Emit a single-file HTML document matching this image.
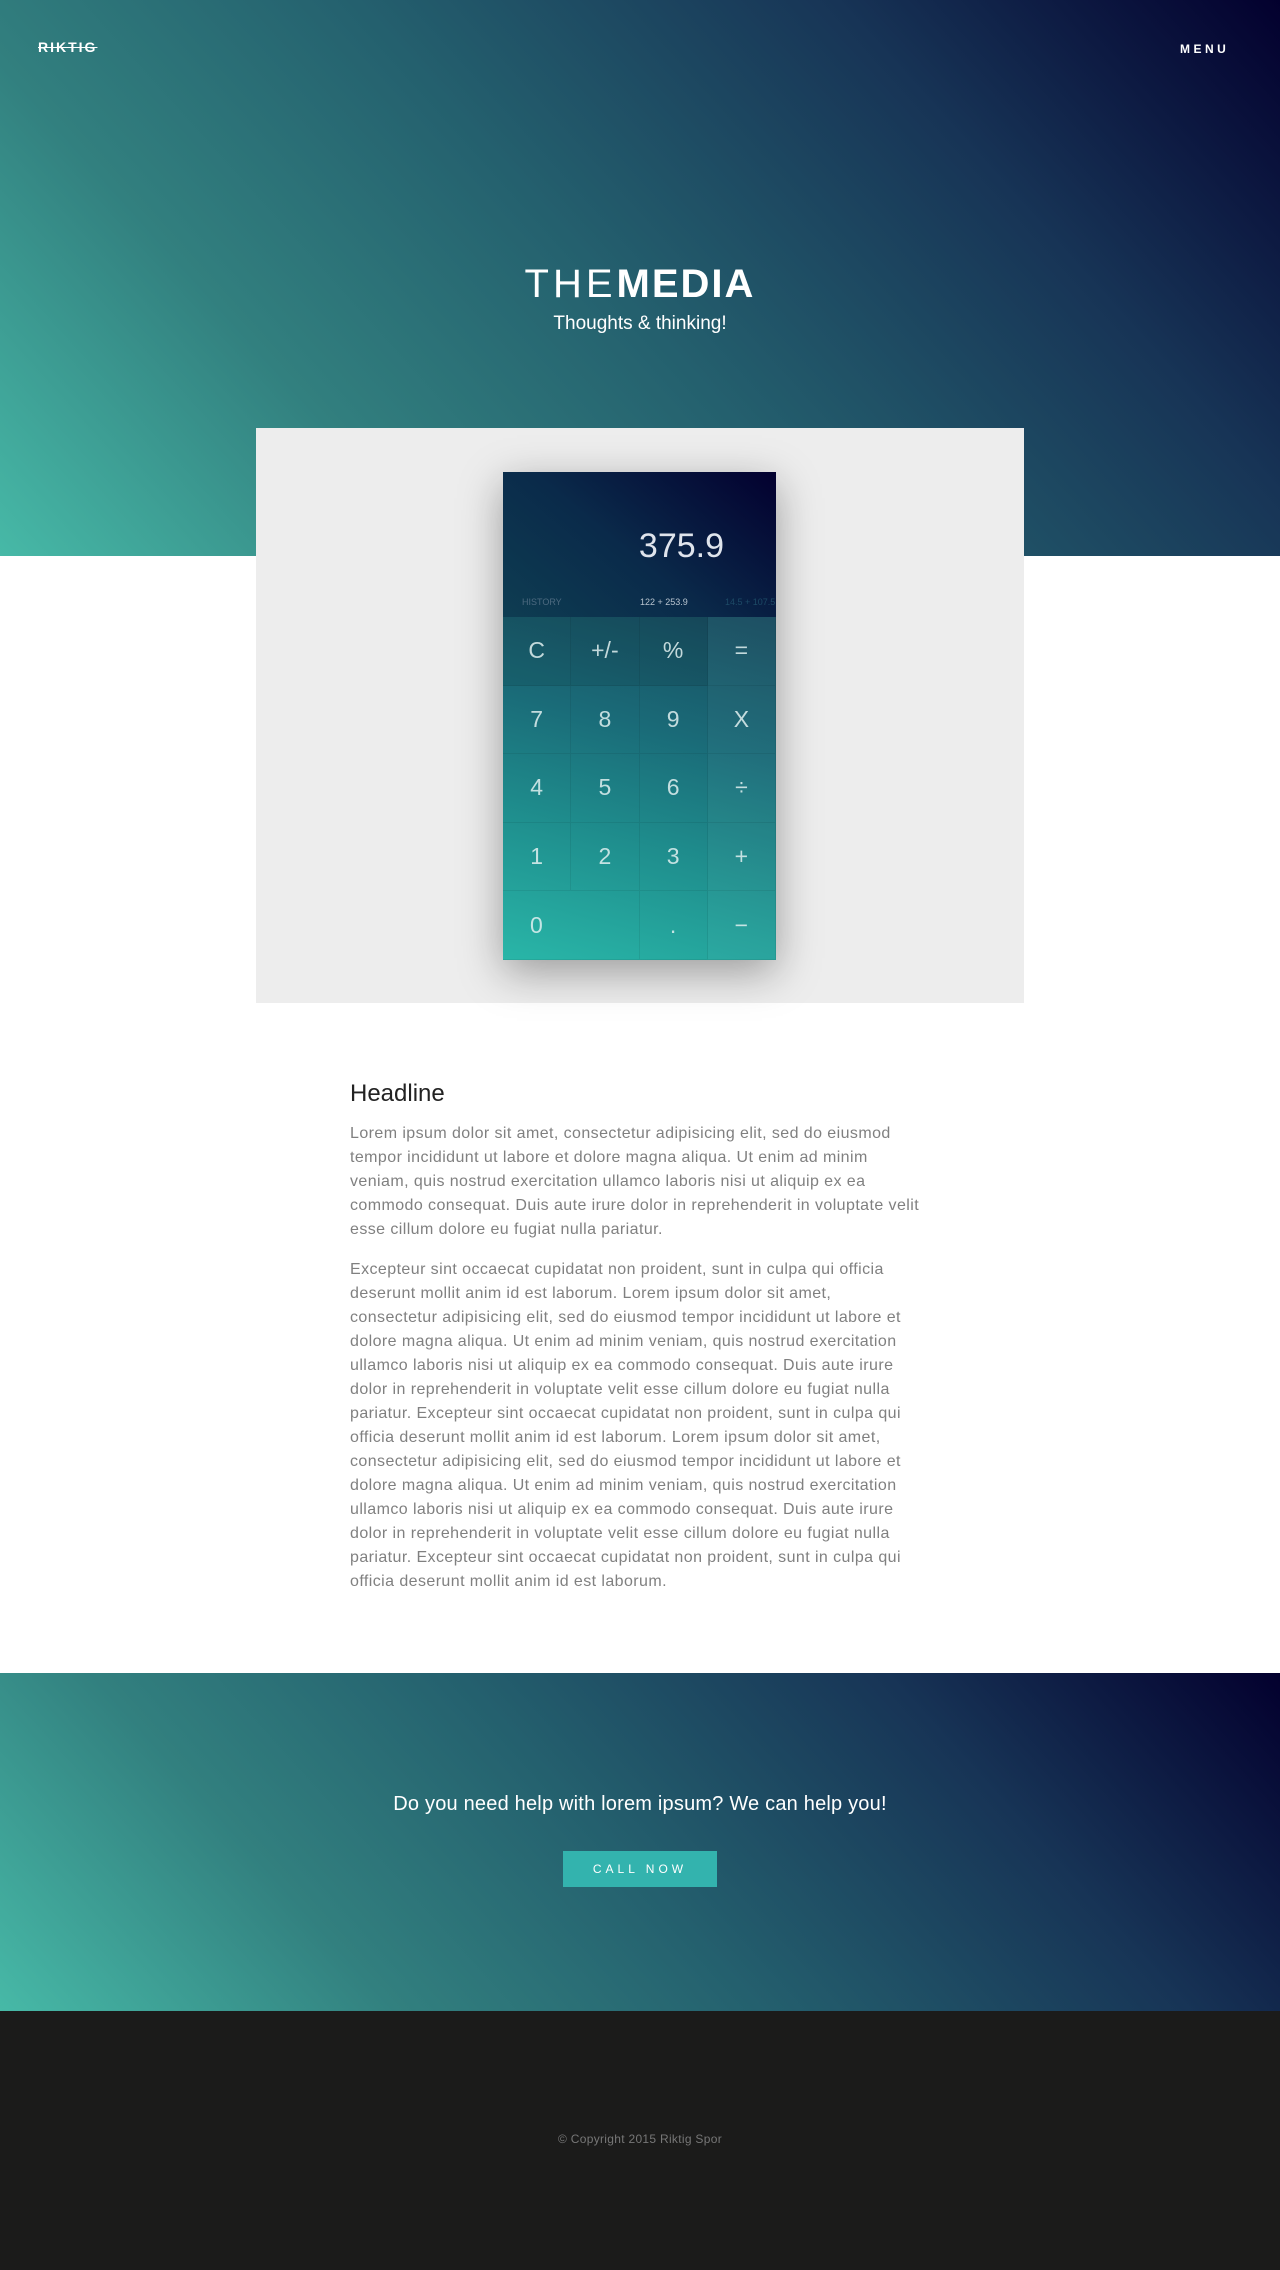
<!DOCTYPE html>
<html><head><meta charset="utf-8"><style>
*{margin:0;padding:0;box-sizing:border-box}
body{width:1280px;height:2270px;font-family:"Liberation Sans",sans-serif;background:#fff;position:relative;overflow:hidden}
.grad{background:linear-gradient(48deg,#47b9a7 0%,#32807f 25%,#24606e 48%,#173456 75%,#03002e 100%)}
#hero{position:absolute;left:0;top:0;width:1280px;height:556px}
.logo{position:absolute;left:38px;top:39px;color:#fff;font-weight:bold;font-size:14px;letter-spacing:2px;text-decoration:line-through}
.menu{position:absolute;left:1180px;top:42px;color:#fff;font-weight:bold;font-size:12px;letter-spacing:3.5px}
h1{position:absolute;left:0;width:1280px;top:262px;text-align:center;color:#fff;font-size:40px;font-weight:300;letter-spacing:2px}
h1 span{letter-spacing:4px}
h1 b{font-weight:bold}
.sub{position:absolute;left:0;width:1280px;top:313px;text-align:center;color:#fff;font-size:19px}
#media{position:absolute;left:256px;top:428px;width:768px;height:575px;background:#ededed}
#calc{position:absolute;left:247px;top:44px;width:273px;height:488px;box-shadow:0 12px 40px rgba(0,0,0,.35);overflow:hidden}
.top{position:absolute;left:0;top:0;width:273px;height:145px;background:linear-gradient(40deg,#0e3d52 0%,#0a2a4a 45%,#03002f 100%)}
.disp{position:absolute;right:52px;top:55px;color:#dfe4ec;font-size:34px;font-weight:300}
.hist{position:absolute;top:125px;font-size:9px;color:#8aa}
.keys{position:absolute;left:0;top:145px;width:273px;height:343px;display:grid;grid-template-columns:repeat(4,1fr);grid-template-rows:repeat(5,1fr);background:linear-gradient(15deg,#29b6a8 0%,#1f8f8e 35%,#1a6b78 65%,#174a5e 100%)}
.keys div{border-right:1px solid rgba(0,0,0,.07);border-bottom:1px solid rgba(0,0,0,.07);color:rgba(225,240,240,.85);font-size:23px;display:flex;align-items:center;justify-content:center}
.keys .op{background:rgba(255,255,255,.03)}
.keys .dk{background:rgba(0,0,0,.08)}
#text{position:absolute;left:350px;top:1080px;width:600px}
#text h2{font-size:24px;font-weight:normal;color:#222;margin-bottom:14px}
#text p{font-size:16px;letter-spacing:.42px;line-height:24px;color:#808080;white-space:nowrap;margin-bottom:16px}
#cta{position:absolute;left:0;top:1673px;width:1280px;height:338px}
.ctat{position:absolute;top:120px;width:1280px;text-align:center;color:#fff;font-size:20px;letter-spacing:.2px}
.btn{position:absolute;left:563px;top:178px;width:154px;height:36px;background:#33b3ae;color:#fff;font-size:12px;letter-spacing:4px;text-align:center;line-height:36px}
#foot{position:absolute;left:0;top:2011px;width:1280px;height:259px;background:#1b1b1a}
.copy{position:absolute;top:121px;width:1280px;text-align:center;color:#777;font-size:12px;letter-spacing:.3px}
</style></head><body>
<div id="hero" class="grad">
<div class="logo">RIKTIG</div>
<div class="menu">MENU</div>
<h1><span>THE</span><b>MEDIA</b></h1>
<div class="sub">Thoughts &amp; thinking!</div>
</div>
<div id="media">
<div id="calc">
<div class="top"></div>
<div class="disp">375.9</div>
<div class="hist" style="left:19px;color:#4d6a80">HISTORY</div>
<div class="hist" style="left:137px;color:#b8c4cf">122 + 253.9</div>
<div class="hist" style="left:222px;color:#1d4a66">14.5 + 107.5</div>
<div class="keys">
<div class="dk">C</div><div class="dk">+/-</div><div class="dk">%</div><div class="op">=</div>
<div>7</div><div>8</div><div>9</div><div class="op">X</div>
<div>4</div><div>5</div><div>6</div><div class="op">÷</div>
<div>1</div><div>2</div><div>3</div><div class="op">+</div>
<div style="justify-content:flex-start;padding-left:27px;border-right:none">0</div><div></div><div>.</div><div class="op">−</div>
</div>
</div>
</div>
<div id="text">
<h2>Headline</h2>
<p>Lorem ipsum dolor sit amet, consectetur adipisicing elit, sed do eiusmod<br>tempor incididunt ut labore et dolore magna aliqua. Ut enim ad minim<br>veniam, quis nostrud exercitation ullamco laboris nisi ut aliquip ex ea<br>commodo consequat. Duis aute irure dolor in reprehenderit in voluptate velit<br>esse cillum dolore eu fugiat nulla pariatur.</p>
<p>Excepteur sint occaecat cupidatat non proident, sunt in culpa qui officia<br>deserunt mollit anim id est laborum. Lorem ipsum dolor sit amet,<br>consectetur adipisicing elit, sed do eiusmod tempor incididunt ut labore et<br>dolore magna aliqua. Ut enim ad minim veniam, quis nostrud exercitation<br>ullamco laboris nisi ut aliquip ex ea commodo consequat. Duis aute irure<br>dolor in reprehenderit in voluptate velit esse cillum dolore eu fugiat nulla<br>pariatur. Excepteur sint occaecat cupidatat non proident, sunt in culpa qui<br>officia deserunt mollit anim id est laborum. Lorem ipsum dolor sit amet,<br>consectetur adipisicing elit, sed do eiusmod tempor incididunt ut labore et<br>dolore magna aliqua. Ut enim ad minim veniam, quis nostrud exercitation<br>ullamco laboris nisi ut aliquip ex ea commodo consequat. Duis aute irure<br>dolor in reprehenderit in voluptate velit esse cillum dolore eu fugiat nulla<br>pariatur. Excepteur sint occaecat cupidatat non proident, sunt in culpa qui<br>officia deserunt mollit anim id est laborum.</p>
</div>
<div id="cta" class="grad">
<div class="ctat">Do you need help with lorem ipsum? We can help you!</div>
<div class="btn">CALL NOW</div>
</div>
<div id="foot"><div class="copy">© Copyright 2015 Riktig Spor</div></div>
</body></html>
